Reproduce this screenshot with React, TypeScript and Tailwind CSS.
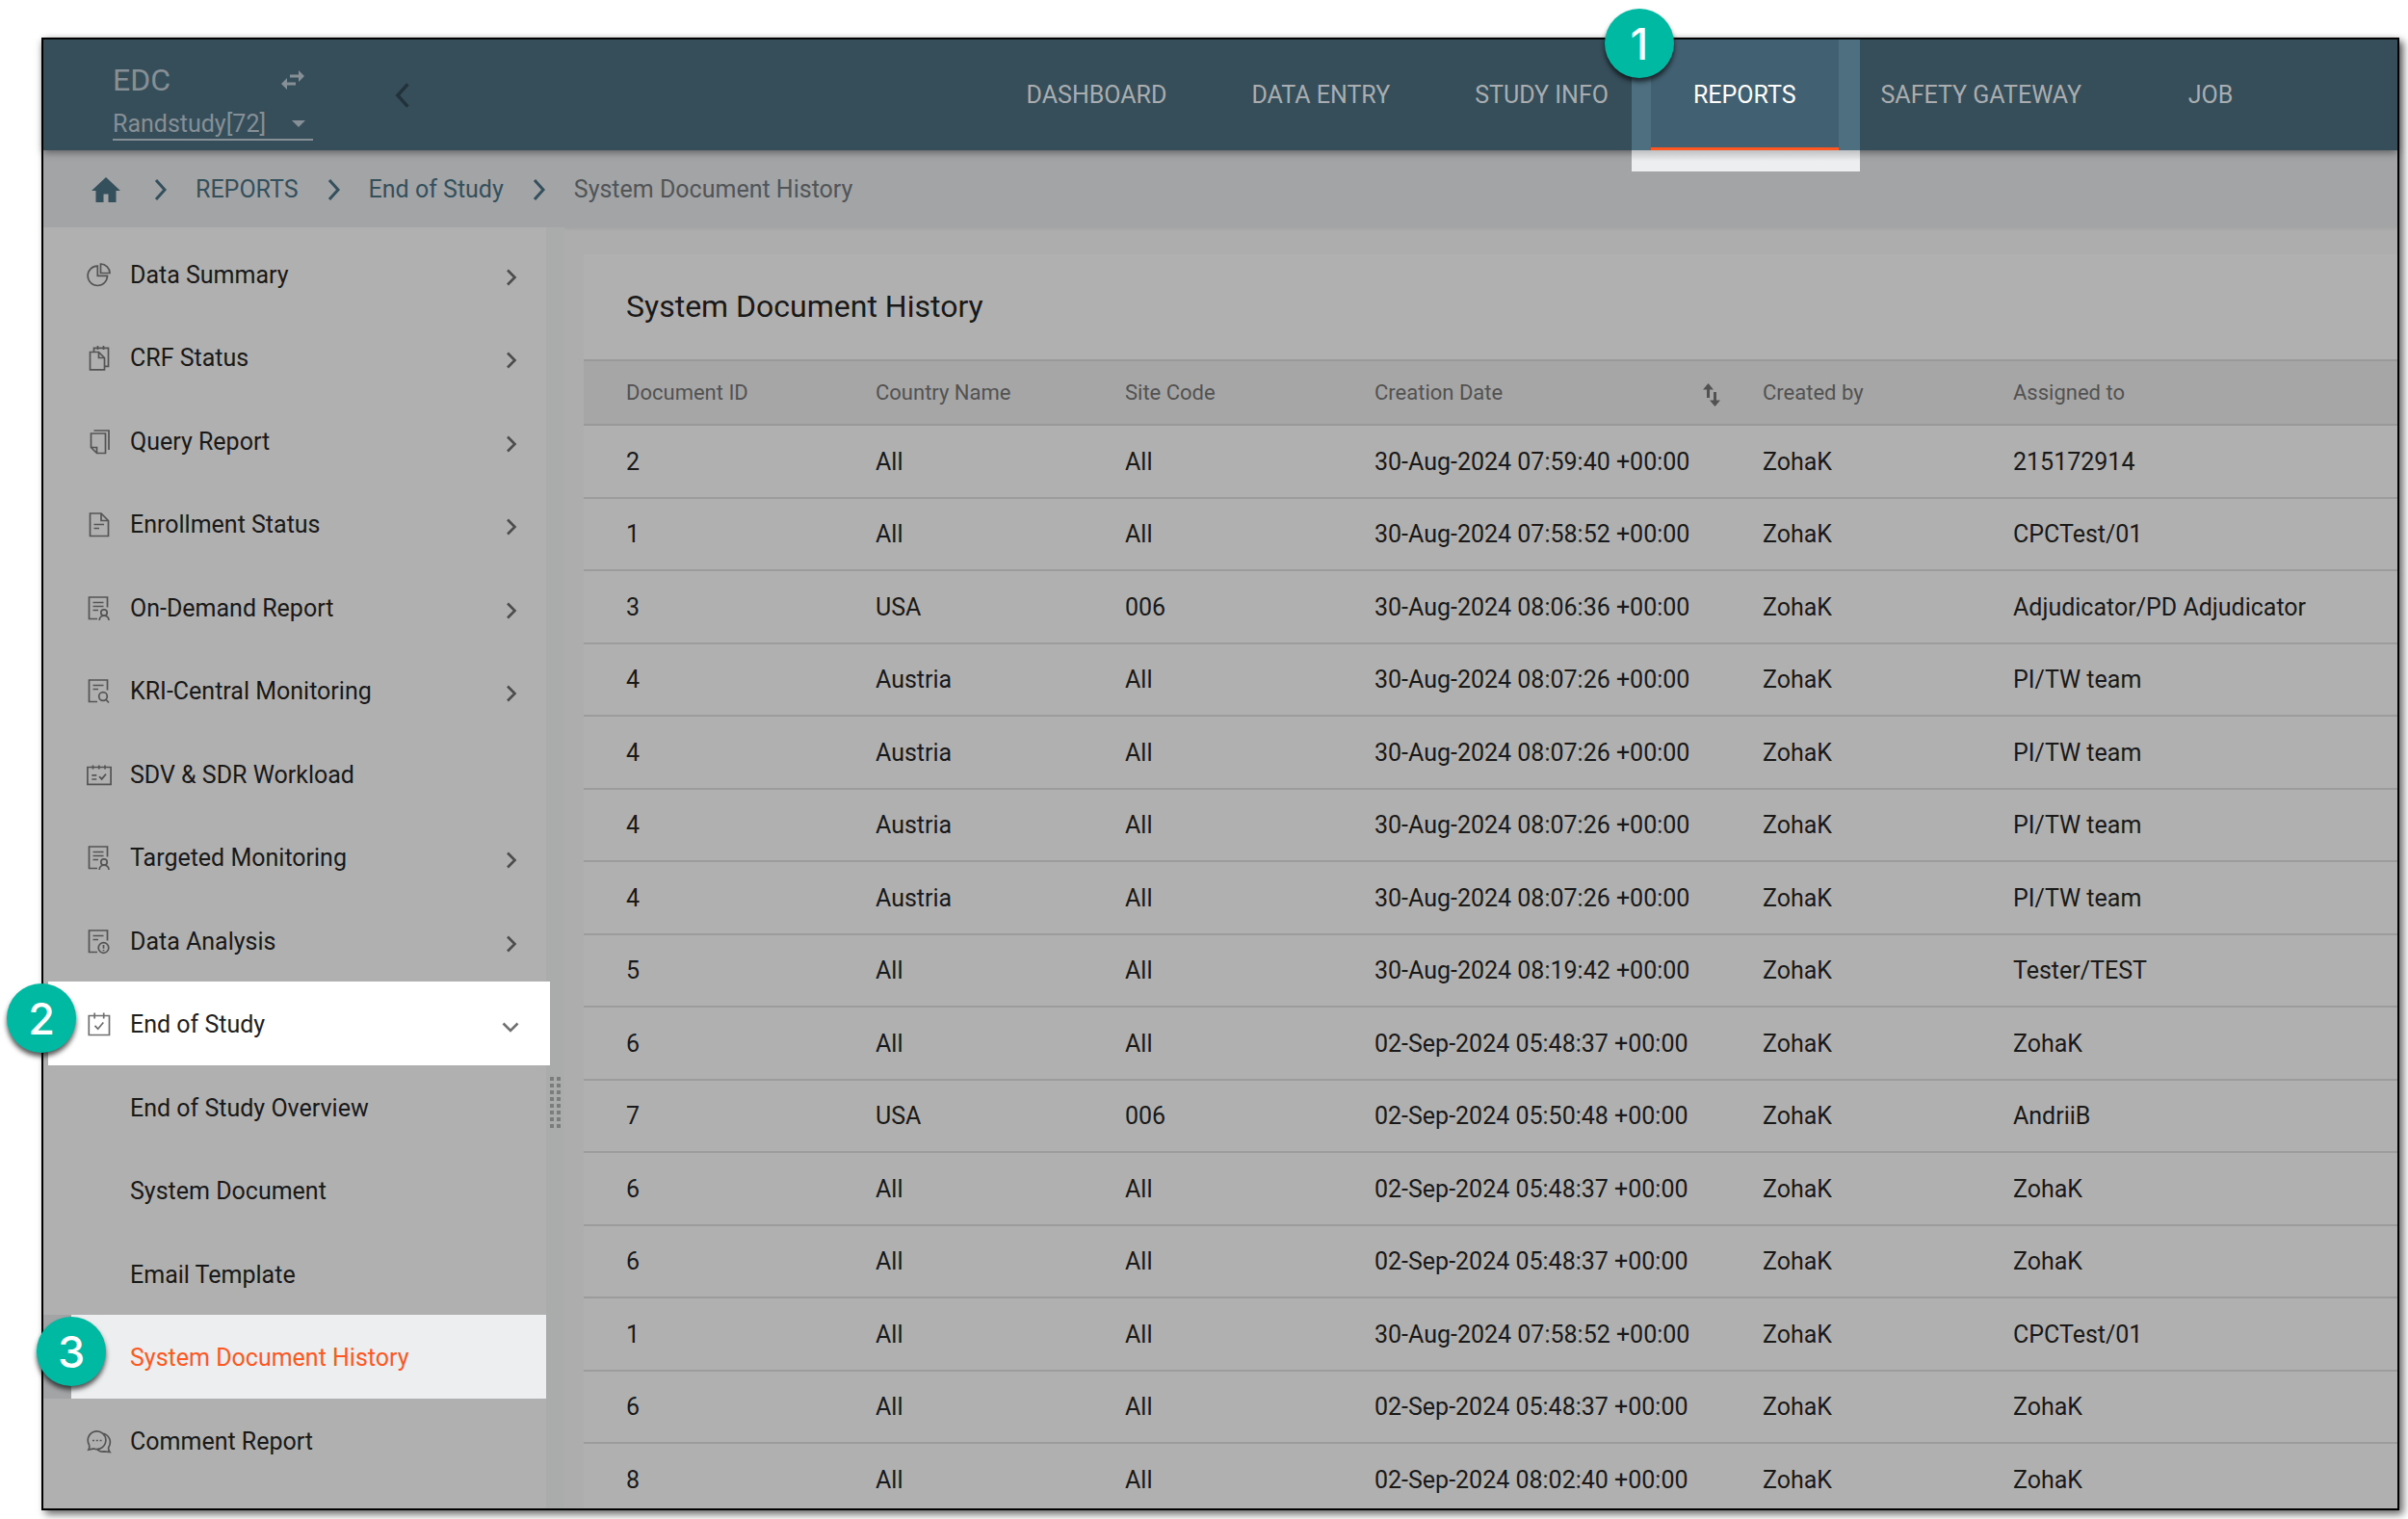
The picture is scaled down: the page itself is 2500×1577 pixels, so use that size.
/**
 * EDC portal - Reports > End of Study > System Document History.
 * Dimmed screen with three numbered callouts over the lit areas.
 */

import type { ReactNode } from "react";

type MenuIcon =
  | "pie"
  | "crf"
  | "query"
  | "enrollment"
  | "person"
  | "search"
  | "workload"
  | "alert"
  | "calendar"
  | "comment";

interface MenuEntry {
  label: string;
  icon?: MenuIcon;
  arrow?: "right" | "down";
  /** Callout number, the row is lit when present */
  step?: number;
  active?: boolean;
}

const menu: MenuEntry[] = [
  { label: "Data Summary", icon: "pie", arrow: "right" },
  { label: "CRF Status", icon: "crf", arrow: "right" },
  { label: "Query Report", icon: "query", arrow: "right" },
  { label: "Enrollment Status", icon: "enrollment", arrow: "right" },
  { label: "On-Demand Report", icon: "person", arrow: "right" },
  { label: "KRI-Central Monitoring", icon: "search", arrow: "right" },
  { label: "SDV & SDR Workload", icon: "workload" },
  { label: "Targeted Monitoring", icon: "person", arrow: "right" },
  { label: "Data Analysis", icon: "alert", arrow: "right" },
  { label: "End of Study", icon: "calendar", arrow: "down", step: 2 },
  { label: "End of Study Overview" },
  { label: "System Document" },
  { label: "Email Template" },
  { label: "System Document History", step: 3, active: true },
  { label: "Comment Report", icon: "comment" },
];

const tabs = ["DASHBOARD", "DATA ENTRY", "STUDY INFO", "REPORTS", "SAFETY GATEWAY", "JOB"];

const rows = [
  ["2", "All", "All", "30-Aug-2024 07:59:40 +00:00", "ZohaK", "215172914"],
  ["1", "All", "All", "30-Aug-2024 07:58:52 +00:00", "ZohaK", "CPCTest/01"],
  ["3", "USA", "006", "30-Aug-2024 08:06:36 +00:00", "ZohaK", "Adjudicator/PD Adjudicator"],
  ["4", "Austria", "All", "30-Aug-2024 08:07:26 +00:00", "ZohaK", "PI/TW team"],
  ["4", "Austria", "All", "30-Aug-2024 08:07:26 +00:00", "ZohaK", "PI/TW team"],
  ["4", "Austria", "All", "30-Aug-2024 08:07:26 +00:00", "ZohaK", "PI/TW team"],
  ["4", "Austria", "All", "30-Aug-2024 08:07:26 +00:00", "ZohaK", "PI/TW team"],
  ["5", "All", "All", "30-Aug-2024 08:19:42 +00:00", "ZohaK", "Tester/TEST"],
  ["6", "All", "All", "02-Sep-2024 05:48:37 +00:00", "ZohaK", "ZohaK"],
  ["7", "USA", "006", "02-Sep-2024 05:50:48 +00:00", "ZohaK", "AndriiB"],
  ["6", "All", "All", "02-Sep-2024 05:48:37 +00:00", "ZohaK", "ZohaK"],
  ["6", "All", "All", "02-Sep-2024 05:48:37 +00:00", "ZohaK", "ZohaK"],
  ["1", "All", "All", "30-Aug-2024 07:58:52 +00:00", "ZohaK", "CPCTest/01"],
  ["6", "All", "All", "02-Sep-2024 05:48:37 +00:00", "ZohaK", "ZohaK"],
  ["8", "All", "All", "02-Sep-2024 08:02:40 +00:00", "ZohaK", "ZohaK"],
];

/** Sheet with the lower right corner left open for a small symbol */
const openSheet = <path d="M21.5 11.5V1h-19v22.5H11" />;

const icons: Record<MenuIcon, ReactNode> = {
  pie: (
    <>
      <path d="M11.3 3.1A10.2 10.2 0 1 0 21.5 13.3H11.3z" />
      <path d="M14.5 1v9.5H24A9.5 9.5 0 0 0 14.5 1z" />
    </>
  ),
  crf: (
    <>
      <path d="M12.5 6.5H3.5v18.3h15V12.5zv6h6" />
      <path d="M7.5 6V2.3h15v19h-3.5M11.5 0v4M17.5 0v4" />
    </>
  ),
  query: (
    <>
      <path d="M4.5 4h15v20.5h-9l-6-6zM4.5 18.5h6v6" />
      <path d="M7.5 1H23v20" />
    </>
  ),
  enrollment: (
    <>
      <path d="M15 1H3.5v23.5h19V8.5zv7.5h7" />
      <path d="M7.5 12.5H18M7.5 16.5h5.5" />
    </>
  ),
  person: (
    <>
      {openSheet}
      <path d="M6.5 6.5h11M6.5 10.5h11M6.5 14.5H12" />
      <circle cx="18" cy="17" r="3.2" />
      <path d="M13.2 25c0-6.4 9.8-6.4 9.8 0" />
    </>
  ),
  search: (
    <>
      {openSheet}
      <path d="M6.5 6.5h11M6.5 10.5H12" />
      <circle cx="17" cy="18" r="4.3" />
      <path d="M20 21.2l3 3.3" />
    </>
  ),
  workload: (
    <>
      <path d="M.9 4.5h24.2v17.8H.9zM6.5 2.5v4M12.8 2.5v4M19 2.5v4" />
      <path d="M5.3 12.8h5M5.3 17h5M13 14.2l2.6 2.7 4.4-5.3" />
    </>
  ),
  alert: (
    <>
      {openSheet}
      <path d="M6.5 6.5h11M6.5 10.5H12" />
      <circle cx="17.5" cy="19" r="5.3" />
      <path d="M17.5 16v3.8M17.5 21v1.2" />
    </>
  ),
  calendar: (
    <>
      <path d="M2.3 3.5h21.2v20H2.3zM8.2.5v6M17.7.5v6" />
      <path d="M8.5 13.8l3.2 3.4 5.6-6.7" />
    </>
  ),
  comment: (
    <>
      <path d="M2.3 15.5A9.3 9.3 0 1 1 7.5 20L2 21c.9-1.700 1-3.700.3-5.500z" />
      <path d="M17.500 4.200c6.300 2 8.700 8.800 5.300 14.300-.5 1.500-.1 3.200 1.200 5l-6-.7c-2.600.6-5 0-6.800-1.900" />
      <path d="M6 11.500h2M9.800 11.500h2M13.600 11.500h2" />
    </>
  ),
};

function Chevron({ className, d = "M3 2l9 10-9 10" }: { className: string; d?: string }) {
  return (
    <svg viewBox="0 0 16 24" fill="none" stroke="currentColor" strokeWidth="3" className={className} aria-hidden="true">
      <path d={d} />
    </svg>
  );
}

function StepBadge({ step, className }: { step: number; className: string }) {
  return (
    <span
      className={`absolute z-20 flex h-[72px] w-[72px] items-center justify-center rounded-full bg-[#00b9a2] font-[Inter,sans-serif] text-[45px] font-medium leading-none text-white shadow-[0_4px_5px_rgba(0,0,0,0.65)] ${className}`}
    >
      {step}
    </span>
  );
}

function TopBar() {
  return (
    <header className="relative z-10 flex h-[115px] shrink-0 bg-[#364e5a] text-[25px] text-[#a9adaf] shadow-[0_2px_8px_rgba(0,0,0,0.45)]">
      <div className="ml-[72px] flex w-[208px] flex-col pt-6 text-[#868f95]">
        <div className="flex h-9 items-center justify-between pr-2">
          <span className="text-[32px] leading-9">EDC</span>
          <button type="button" aria-label="Switch application">
            <svg viewBox="0 0 26 20" fill="currentColor" className="h-5 w-[26px]">
              <path d="M10 4.500h9V0l6 6-6 6V7.500h-9zM16 12.500H7V8l-6 6 6 6v-4.500h9z" />
            </svg>
          </button>
        </div>
        <div className="relative mt-1 border-b-2 border-[#868f95]">
          <select
            aria-label="Study"
            className="block h-[39px] w-full appearance-none bg-transparent pr-10 pt-2 leading-[30px] outline-none"
          >
            <option>Randstudy[72]</option>
          </select>
          <svg viewBox="0 0 14 7" fill="currentColor" className="pointer-events-none absolute right-2 top-5 h-[7px] w-[14px]">
            <path d="M0 0h14L7 7z" />
          </svg>
        </div>
      </div>
      <button type="button" aria-label="Collapse menu" className="ml-[83px] text-[#22323b]">
        <Chevron className="h-7 w-[19px]" d="M13 2L4 12l9 10" />
      </button>
      <nav className="ml-auto pr-[104px]">
        <ul className="flex h-full">
          {tabs.map((tab) =>
            tab === "REPORTS" ? (
              <li key={tab} className="relative">
                <span className="absolute -left-5 -right-[22px] inset-y-0 bg-[#4e6f80]" />
                <span className="absolute -left-5 -right-[22px] top-full h-[22px] bg-linear-to-b from-[#bfc0c1] to-[#edeef0] to-50%" />
                <a
                  href="#reports"
                  className="relative flex h-full items-center border-b-[3px] border-[#ff5722] bg-[#416071] px-11 pt-[3px] text-white"
                >
                  {tab}
                </a>
                <StepBadge step={1} className="-left-12 -top-8" />
              </li>
            ) : (
              <li key={tab}>
                <a href="#tab" className="flex h-full min-w-[180px] items-center justify-center px-11">
                  {tab}
                </a>
              </li>
            ),
          )}
        </ul>
      </nav>
    </header>
  );
}

function Breadcrumb() {
  return (
    <nav
      aria-label="Breadcrumb"
      className="flex h-20 shrink-0 items-center bg-[#a3a4a6] pl-[50px] pt-px text-[25px] text-[#34505d] shadow-[0_1px_4px_rgba(0,0,0,0.08)]"
    >
      <a href="#home" aria-label="Home">
        <svg viewBox="0 0 30 26" fill="currentColor" className="h-[26px] w-[30px]">
          <path d="M15 0L0 14h4.500v12h8v-8.500h5V26h8V14H30z" />
        </svg>
      </a>
      <Chevron className="ml-[34px] h-6 w-4" />
      <a href="#reports" className="ml-7">REPORTS</a>
      <Chevron className="ml-[29px] h-6 w-4" />
      <a href="#study" className="ml-7">End of Study</a>
      <Chevron className="ml-[29px] h-6 w-4" />
      <span className="ml-7 text-[#515558]">System Document History</span>
    </nav>
  );
}

function MenuRow({ label, icon, arrow, step, active }: MenuEntry) {
  const lit = step !== undefined && !active;
  return (
    <li className={`relative flex odd:h-[86px] even:h-[87px] ${active ? "bg-[#a3a4a6]" : ""}`}>
      <button
        type="button"
        className={`flex flex-1 items-center pt-[3px] text-left ${
          active
            ? "ml-[29px] bg-[#edeef0] pl-4 text-[#ff5722]"
            : lit
              ? "-mr-1 ml-[5px] bg-white pl-10 pr-8 text-[#1f1f1f]"
              : "pl-[45px] pr-7"
        }`}
      >
        <span className={`h-[26px] w-[26px] ${lit ? "text-[#6f6f6f]" : "text-[#545454]"}`}>
          {icon && (
            <svg viewBox="0 0 26 26" fill="none" stroke="currentColor" strokeWidth="1.7" className="h-[26px] w-[26px]">
              {icons[icon]}
            </svg>
          )}
        </span>
        <span className="ml-[19px] flex-1">{label}</span>
        {arrow && (
          <svg
            viewBox="0 0 18 18"
            fill="none"
            stroke={lit ? "#6f6f6f" : "#4c4c4c"}
            strokeWidth="2.600"
            className="mt-1 h-[18px] w-[18px]"
          >
            <path d={arrow === "right" ? "M6 1.500L13.500 9 6 16.500" : "M1.500 5.500L9 13l7.500-7.500"} />
          </svg>
        )}
      </button>
      {step !== undefined && <StepBadge step={step} className={active ? "-left-[7px] top-0.5" : "-left-[38px] top-0.5"} />}
    </li>
  );
}

function DocumentTable() {
  return (
    <section className="mt-7 min-w-0 flex-1 bg-[#b0b0b0]">
      <h1 className="flex h-[109px] items-center pb-0.5 pl-11 text-[32px]">System Document History</h1>
      <table className="w-full table-fixed border-collapse text-left">
        <colgroup>
          <col className="w-[303px]" />
          <col className="w-[259px]" />
          <col className="w-[259px]" />
          <col className="w-[403px]" />
          <col className="w-[260px]" />
          <col />
        </colgroup>
        <thead className="bg-[#a6a6a6] text-[22px] text-[#525252]">
          <tr className="h-[67px] border-y-2 border-[#999999]">
            <th className="pl-11 font-normal">Document ID</th>
            <th className="font-normal">Country Name</th>
            <th className="font-normal">Site Code</th>
            <th className="font-normal">
              <div className="flex items-center justify-between pr-[43px]">
                Creation Date
                <button type="button" aria-label="Sort by creation date">
                  <svg viewBox="0 0 20 24" fill="currentColor" className="mt-1 h-6 w-5">
                    <path d="M6.500 0L1 6.500h4V15h3V6.500h4zM15 17.500V9h-3v8.500H8l5.500 6.500 5.500-6.500z" />
                  </svg>
                </button>
              </div>
            </th>
            <th className="font-normal">Created by</th>
            <th className="font-normal">Assigned to</th>
          </tr>
        </thead>
        <tbody>
          {rows.map((row, index) => (
            <tr key={index} className="border-b-2 border-[#9c9c9c] odd:h-[76px] even:h-[75px]">
              {row.map((cell, column) => (
                <td key={column} className="pt-px first:pl-11">
                  {cell}
                </td>
              ))}
            </tr>
          ))}
        </tbody>
      </table>
    </section>
  );
}

export default function App() {
  return (
    <div className="h-screen overflow-hidden bg-white pb-[9px] pl-[43px] pr-[9px] pt-[39px] font-[Roboto,sans-serif] text-[#191919]">
      <div className="flex h-full flex-col border-2 border-black bg-[#adadad] text-[25px] shadow-[4px_4px_8px_rgba(0,0,0,0.6)]">
        <TopBar />
        <Breadcrumb />
        <div className="flex min-h-0 flex-1">
          <aside className="w-[522px] shrink-0 bg-[#b0b0b0] pt-[5px]">
            <ul>
              {menu.map((entry) => (
                <MenuRow key={entry.label} {...entry} />
              ))}
            </ul>
          </aside>
          <div className="flex w-[19px] shrink-0 flex-col justify-end bg-[#aaacab] pb-[395px] pl-1">
            <div className="grid w-[11px] grid-cols-2 gap-[3px]">
              {Array.from({ length: 16 }, (_, dot) => (
                <span key={dot} className="h-1 w-1 bg-[#7b7d7c]" />
              ))}
            </div>
          </div>
          <main className="flex min-w-0 flex-1 overflow-hidden pl-5">
            <DocumentTable />
          </main>
        </div>
      </div>
    </div>
  );
}
